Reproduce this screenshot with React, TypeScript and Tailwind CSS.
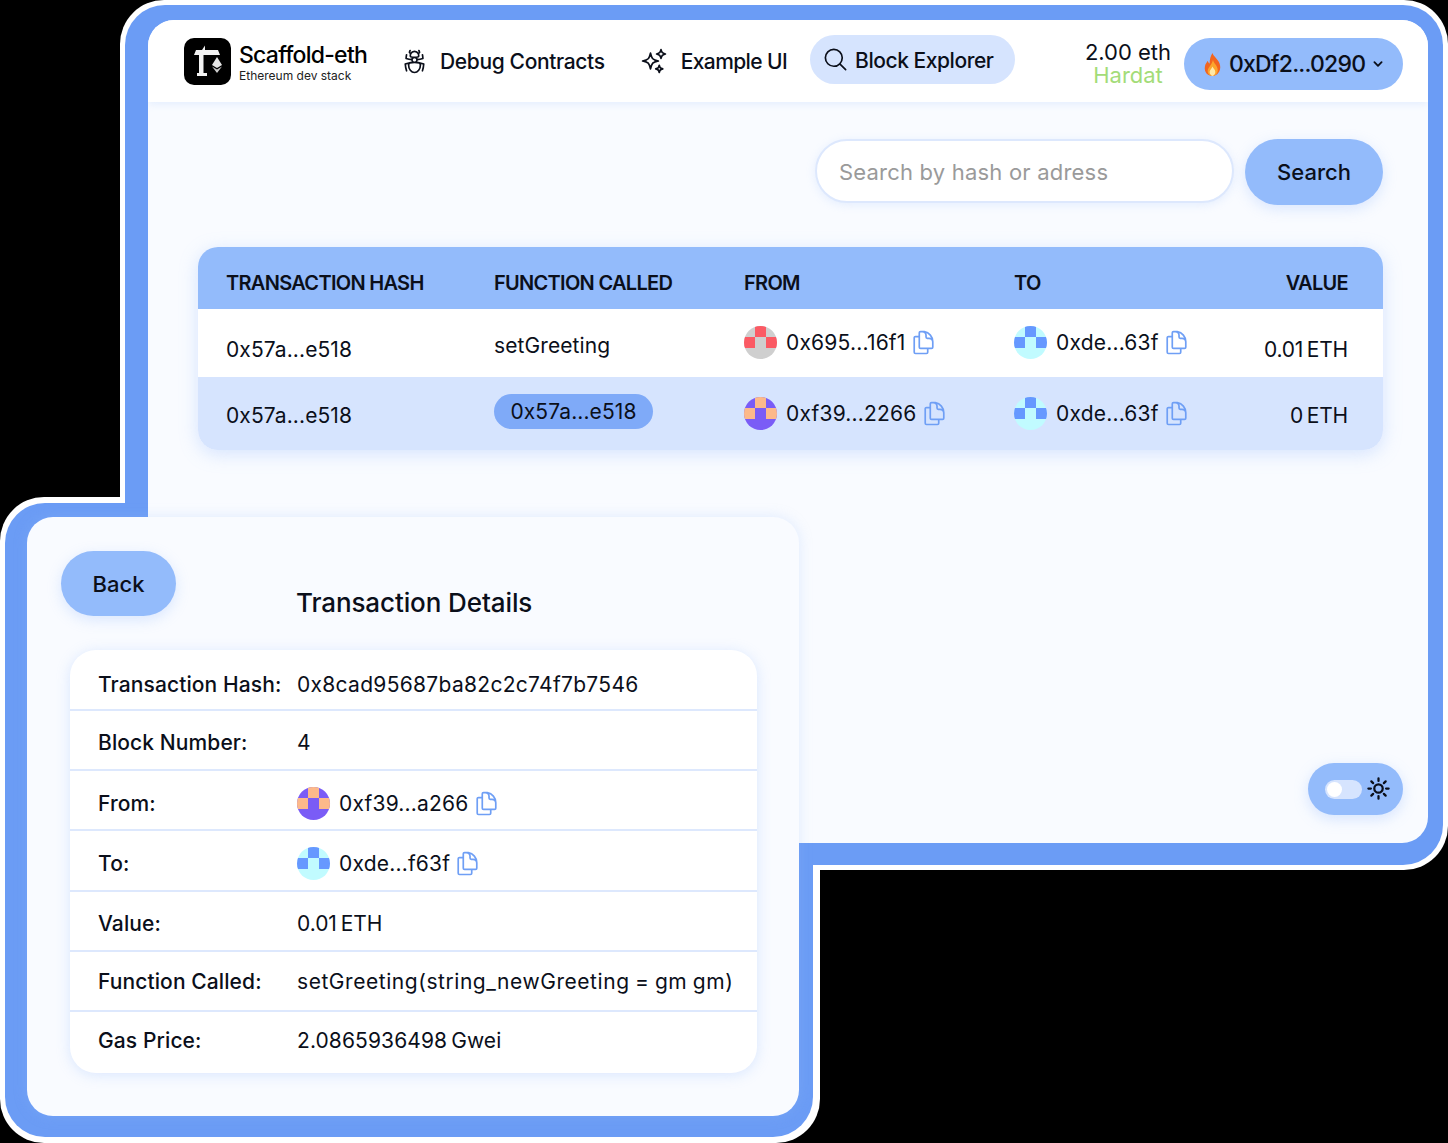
import {
  HiOutlineBugAnt,
  HiOutlineDocumentDuplicate,
  HiOutlineMagnifyingGlass,
  HiOutlineSparkles,
  HiOutlineSun,
} from "react-icons/hi2";
import { HiChevronDown } from "react-icons/hi";

const FONT = "font-['Inter','Liberation_Sans',sans-serif]";

const Blockie = ({ bg, fg }: { bg: string; fg: string }) => (
  <div className={`grid size-[33px] shrink-0 grid-cols-3 grid-rows-3 overflow-hidden rounded-full ${bg}`}>
    <div />
    <div className={fg} />
    <div />
    <div className={fg} />
    <div />
    <div className={fg} />
  </div>
);

const Red = () => <Blockie bg="bg-[#cfcfcf]" fg="bg-[#fb5a64]" />;
const Purple = () => <Blockie bg="bg-[#7a5cf6]" fg="bg-[#fdb98a]" />;
const Aqua = () => <Blockie bg="bg-[#c1fbff]" fg="bg-[#6698ff]" />;

const Address = ({ avatar, text }: { avatar: React.ReactNode; text: string }) => (
  <div className="flex items-center gap-[9px]">
    {avatar}
    <span className="text-[21px] leading-none tracking-[0.2px] text-[#0b0f1a]">{text}</span>
    <HiOutlineDocumentDuplicate className="-ml-[5px] size-[27px] shrink-0 text-[#6f9ff5]" />
  </div>
);

const Logo = () => (
  <svg viewBox="0 0 47 47" className="size-[47px] shrink-0">
    <rect width="47" height="47" rx="10" fill="#000" />
    <path d="M18 12l3-4.500V12z" fill="#f2f2f2" />
    <path d="M10 17l2-5h22l2 5z" fill="#f2f2f2" />
    <path d="M15 17h4.500v18H15z" fill="#f2f2f2" />
    <path d="M13 35h10v3H13z" fill="#f2f2f2" />
    <path d="M33 19l5 8-5 3-5-3z" fill="#e6e6e6" />
    <path d="M28 28.500l5 3 5-3-5 6.500z" fill="#c9c9c9" />
  </svg>
);

const Flame = () => (
  <svg viewBox="0 0 20 24" className="h-[23px] w-[19px] shrink-0">
    <path d="M10 0c1 4 7 7 8 13 1 6-3 11-8 11S1 20 2 14c.5-3 2-4 3-6 .5 1.500 1 2.500 2 3 0-4 1-8 3-11z" fill="#f2651f" />
    <path d="M10.500 7c.5 4 5 6 5 11 0 3.500-2.500 6-5.500 6s-5.500-2.500-5-6c.5-3 4.500-6 5.500-11z" fill="#fba52c" />
    <path d="M10 14c.5 2 3 3 3 6 0 2-1.500 4-3 4s-3-2-3-4c0-2.500 2.500-4 3-6z" fill="#ffe9a8" />
  </svg>
);

const TH = "text-[20px] font-semibold leading-none tracking-[-0.7px] text-[#0b0f1a]";
const TD = "text-[21px] leading-none tracking-[0.1px] text-[#0b0f1a]";
const ETH = "text-[21px] leading-none tracking-[-0.2px] text-[#0b0f1a] [word-spacing:-2px]";
const ROW = "grid grid-cols-[268px_250px_270px_1fr] pl-[28px] pr-[35px]";

const DETAILS: { label: string; value: React.ReactNode; row: string; text: string }[] = [
  {
    label: "Transaction Hash:",
    value: <span>0x8cad95687ba82c2c74f7b7546</span>,
    row: "h-[61px] pt-[9px]",
    text: "tracking-[0.3px]",
  },
  { label: "Block Number:", value: <span>4</span>, row: "h-[60px] pt-[5px]", text: "" },
  {
    label: "From:",
    value: <Address avatar={<Purple />} text="0xf39...a266" />,
    row: "h-[60px] pt-[6px]",
    text: "",
  },
  {
    label: "To:",
    value: <Address avatar={<Aqua />} text="0xde...f63f" />,
    row: "h-[61px] pt-[5px]",
    text: "",
  },
  {
    label: "Value:",
    value: <span>0.01 ETH</span>,
    row: "h-[60px] pt-[4px]",
    text: "tracking-[-0.05px] [word-spacing:-2px]",
  },
  {
    label: "Function Called:",
    value: <span>setGreeting(string_newGreeting = gm gm)</span>,
    row: "h-[60px] pt-[1px]",
    text: "tracking-[0.55px] [word-spacing:-1px]",
  },
  {
    label: "Gas Price:",
    value: <span>2.0865936498 Gwei</span>,
    row: "h-[61px] pb-[5px]",
    text: "tracking-[0.1px] [word-spacing:-2px]",
  },
];

export default function App() {
  return (
    <div className={`relative h-[1143px] w-[1448px] overflow-hidden bg-black ${FONT}`}>
      {/* white halos sit behind both frames */}
      <div className="absolute left-[120px] top-0 h-[870px] w-[1328px] rounded-[44px] bg-white" />
      <div className="absolute left-0 top-[497px] h-[646px] w-[820px] rounded-[44px] bg-white" />
      <div className="absolute left-[5px] top-[503px] h-[634px] w-[808px] rounded-[40px] bg-[#6b9cf5]" />

      {/* main window */}
      <div className="absolute left-[125px] top-[5px] h-[860px] w-[1318px] rounded-[40px] bg-[#6b9cf5] pb-[22px] pl-[23px] pr-[15px] pt-[15px]">
        <div className="relative flex h-full flex-col overflow-hidden rounded-[26px] bg-[#f9fbff]">
          <header className="flex h-[82px] shrink-0 items-center bg-white pl-[36px] pr-[25px] shadow-[0_2px_8px_rgba(147,187,251,0.2)]">
            <Logo />
            <div className="ml-[8px] flex w-[165px] translate-y-[2px] flex-col">
              <span className="text-[23px] font-medium leading-[26px] tracking-[-0.75px] text-black">Scaffold-eth</span>
              <span className="text-[12px] leading-[16px] text-[#222]">Ethereum dev stack</span>
            </div>
            <div className="-ml-[3px] flex items-center gap-[12px]">
              <HiOutlineBugAnt className="size-[27px] text-[#0b0f1a]" />
              <span className="text-[21px] font-medium leading-none tracking-[-0.35px] text-[#0b0f1a]">Debug Contracts</span>
            </div>
            <div className="ml-[35px] flex items-center gap-[13px]">
              <HiOutlineSparkles className="size-[28px] text-[#0b0f1a]" />
              <span className="text-[21px] font-medium leading-none tracking-[-0.6px] text-[#0b0f1a]">Example UI</span>
            </div>
            <div className="ml-[23px] flex h-[49px] w-[205px] -translate-y-[2px] items-center gap-[6px] rounded-[25px] bg-[#d6e4fe] pl-[12px]">
              <HiOutlineMagnifyingGlass className="size-[27px] text-[#0b0f1a]" />
              <span className="pt-[3px] text-[21px] font-medium leading-none tracking-[-0.45px] text-[#0b0f1a]">Block Explorer</span>
            </div>
            <div className="ml-auto mr-[12px] flex w-[88px] translate-y-[3px] flex-col items-center">
              <span className="text-[22px] leading-[23px] text-[#0b0f1a]">2.00 eth</span>
              <span className="text-[22px] leading-[23px] text-[#a3dc78]">Hardat</span>
            </div>
            <div className="flex h-[52px] w-[219px] translate-y-[3px] items-center rounded-[26px] bg-[#93bbfb] pl-[19px]">
              <Flame />
              <span className="ml-[7px] text-[23px] font-medium leading-none tracking-[-0.8px] text-[#0b0f1a]">0xDf2...0290</span>
              <HiChevronDown className="ml-[4px] size-[18px] text-[#0b0f1a]" />
            </div>
          </header>

          <div className="flex flex-col pl-[50px] pr-[45px]">
            <div className="mt-[37px] flex justify-end gap-[11px]">
              <div className="flex h-[64px] w-[419px] items-center rounded-[32px] border-2 border-[#dde8fd] bg-white pl-[22px] pt-[2px] shadow-[0_2px_10px_rgba(147,187,251,0.2)]">
                <span className="text-[22px] leading-none tracking-[0.2px] text-[#9a9a9a]">Search by hash or adress</span>
              </div>
              <div className="flex h-[66px] w-[138px] items-center justify-center rounded-[33px] bg-[#93bbfb] shadow-[0_4px_14px_rgba(147,187,251,0.3)]">
                <span className="text-[22px] font-medium leading-none text-[#0b0f1a]">Search</span>
              </div>
            </div>

            <div className="mt-[42px] overflow-hidden rounded-[20px] bg-white shadow-[0_4px_18px_rgba(147,187,251,0.35)]">
              <div className={`${ROW} h-[62px] items-center bg-[#93bbfb] pt-[10px]`}>
                <span className={TH}>TRANSACTION HASH</span>
                <span className={TH}>FUNCTION CALLED</span>
                <span className={TH}>FROM</span>
                <div className="flex justify-between">
                  <span className={TH}>TO</span>
                  <span className={TH}>VALUE</span>
                </div>
              </div>
              <div className={`${ROW} h-[68px] bg-white`}>
                <span className={`${TD} pt-[30px]`}>0x57a...e518</span>
                <span className={`${TD} pt-[26px]`}>setGreeting</span>
                <div className="pt-[17px]">
                  <Address avatar={<Red />} text="0x695...16f1" />
                </div>
                <div className="flex items-start justify-between pt-[17px]">
                  <Address avatar={<Aqua />} text="0xde...63f" />
                  <span className={`${ETH} pt-[13px]`}>0.01 ETH</span>
                </div>
              </div>
              <div className={`${ROW} h-[73px] bg-[#d6e4fe]`}>
                <span className={`${TD} pt-[28px]`}>0x57a...e518</span>
                <div className="pt-[17px]">
                  <span className="inline-flex h-[35px] w-[159px] items-center justify-center rounded-full bg-[#7faaf8] text-[21px] leading-none tracking-[0.1px] text-[#0b0f1a]">
                    0x57a...e518
                  </span>
                </div>
                <div className="pt-[20px]">
                  <Address avatar={<Purple />} text="0xf39...2266" />
                </div>
                <div className="flex items-start justify-between pt-[20px]">
                  <Address avatar={<Aqua />} text="0xde...63f" />
                  <span className={`${ETH} pt-[8px]`}>0 ETH</span>
                </div>
              </div>
            </div>
          </div>

          {/* theme toggle floats over the page */}
          <div className="absolute bottom-[28px] right-[25px] flex h-[52px] w-[95px] items-center rounded-[26px] bg-[#93bbfb] pl-[17px] shadow-[0_4px_14px_rgba(147,187,251,0.35)]">
            <div className="flex h-[19px] w-[37px] items-center rounded-full bg-[#d6e4fe] pl-[2px]">
              <div className="size-[15px] rounded-full bg-white" />
            </div>
            <HiOutlineSun strokeWidth={2} className="ml-[3px] size-[27px] -translate-y-[1px] text-[#0b0f1a]" />
          </div>
        </div>
      </div>

      {/* details window, panel only: its frame lies under the main window */}
      <div className="absolute left-[27px] top-[517px] flex h-[599px] w-[772px] flex-col rounded-[26px] bg-[#f9fbff] pl-[34px] pr-[42px] shadow-[0_0_14px_rgba(147,187,251,0.25)]">
        <div className="flex h-[133px] shrink-0 pt-[34px]">
          <div className="flex h-[65px] w-[115px] items-center justify-center rounded-[33px] bg-[#93bbfb] shadow-[0_4px_14px_rgba(147,187,251,0.3)]">
            <span className="text-[22px] font-medium leading-none text-[#0b0f1a]">Back</span>
          </div>
          <span className="ml-[120px] mt-[39px] text-[26px] font-medium leading-none tracking-[-0.1px] text-[#0b0f1a]">
            Transaction Details
          </span>
        </div>
        <div className="ml-[9px] flex h-[423px] flex-col divide-y-2 divide-[#dde8fd] rounded-[26px] bg-white shadow-[0_2px_14px_rgba(147,187,251,0.3)]">
          {DETAILS.map((item) => (
            <div key={item.label} className={`grid grid-cols-[199px_1fr] items-center pl-[28px] text-[#0b0f1a] ${item.row}`}>
              <span className="text-[21px] font-medium leading-none tracking-[0.1px]">{item.label}</span>
              <div className={`text-[21px] leading-none ${item.text}`}>{item.value}</div>
            </div>
          ))}
        </div>
      </div>
    </div>
  );
}
